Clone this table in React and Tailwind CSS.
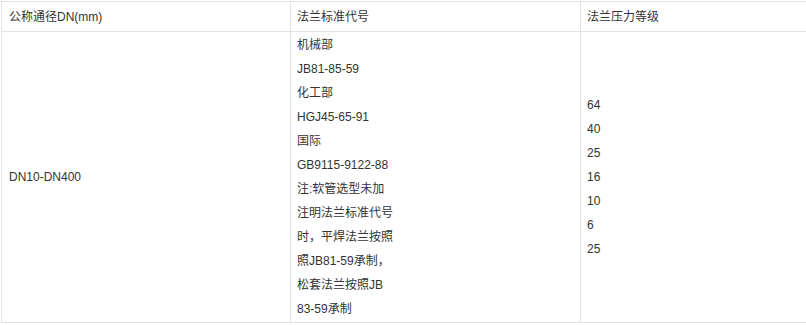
export default function App() {
  const col2 = [
    "机械部",
    "JB81-85-59",
    "化工部",
    "HGJ45-65-91",
    "国际",
    "GB9115-9122-88",
    "注:软管选型未加",
    "注明法兰标准代号",
    "时，平焊法兰按照",
    "照JB81-59承制，",
    "松套法兰按照JB",
    "83-59承制",
  ];
  const col3 = ["64", "40", "25", "16", "10", "6", "25"];
  return (
    <div
      className="w-[806px] h-[325px] bg-white text-[#333] text-[12px] overflow-hidden"
      style={{ fontFamily: '"Liberation Sans", Arial, "Noto Sans CJK SC", sans-serif' }}
    >
      <div className="ml-px mt-px w-[840px] border-t border-l border-[#e3e3e3] grid grid-cols-[289px_290px_1fr]">
        <div className="h-[30px] flex items-center px-[7px] border-b border-r border-[#e3e3e3]">公称通径DN(mm)</div>
        <div className="h-[30px] flex items-center px-[6px] border-b border-r border-[#e3e3e3]">法兰标准代号</div>
        <div className="h-[30px] flex items-center px-[6px] border-b border-r border-[#e3e3e3]">法兰压力等级</div>

        <div className="flex items-center px-[7px] border-b border-r border-[#e3e3e3]">DN10-DN400</div>
        <div className="flex flex-col py-[1px] px-[6px] border-b border-r border-[#e3e3e3] h-[291px]">
          {col2.map((t, i) => (
            <div key={i} className="leading-[24px]">{t}</div>
          ))}
        </div>
        <div className="flex flex-col justify-center px-[6px] border-b border-r border-[#e3e3e3]">
          {col3.map((t, i) => (
            <div key={i} className="leading-[24px]">{t}</div>
          ))}
        </div>
      </div>
    </div>
  );
}
